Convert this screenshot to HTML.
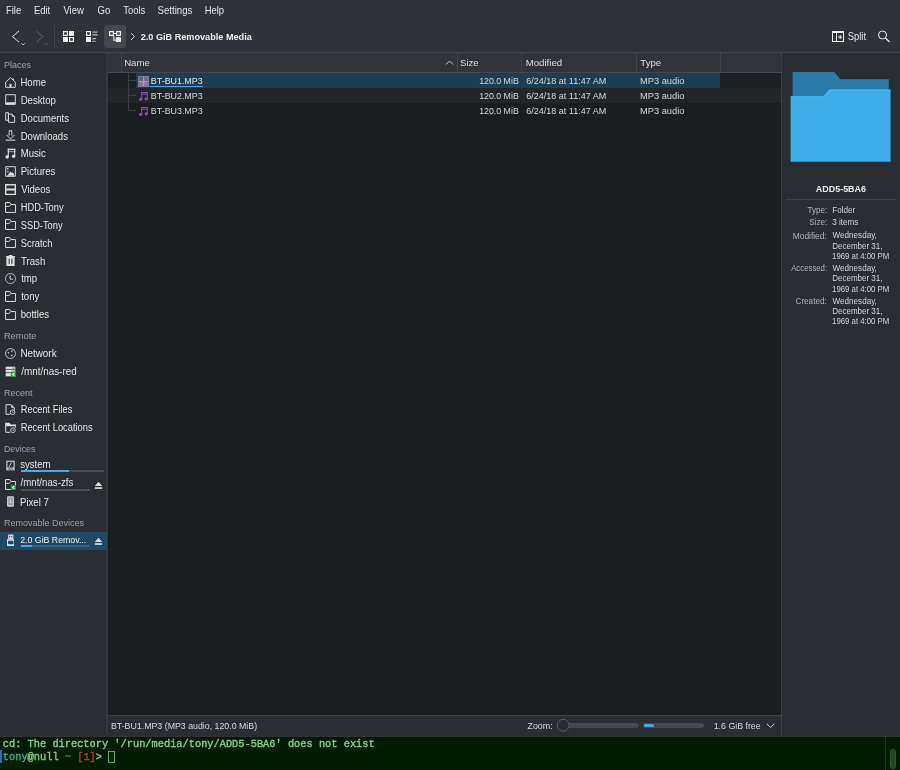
<!DOCTYPE html>
<html><head><meta charset="utf-8">
<style>
*{margin:0;padding:0;box-sizing:border-box}
html,body{width:900px;height:770px;overflow:hidden;background:#2a2e32}
.a{position:absolute;white-space:nowrap}
#root{position:absolute;left:0;top:0;width:900px;height:770px;will-change:transform;overflow:hidden}
</style></head><body><div id="root">
<div class="a" style="left:0px;top:0px;width:900px;height:52px;background:#2f3338;"></div>
<div class="a" style="left:0px;top:52px;width:900px;height:1px;background:#43474c;"></div>
<div class="a" style="left:0px;top:53px;width:106px;height:683px;background:#2a2e32;"></div>
<div class="a" style="left:106px;top:53px;width:2px;height:683px;background:#34383d;"></div>
<div class="a" style="left:108px;top:53px;width:673px;height:662px;background:#1b1e20;"></div>
<div class="a" style="left:781px;top:53px;width:1px;height:683px;background:#3a3e43;"></div>
<div class="a" style="left:782px;top:53px;width:118px;height:683px;background:#2a2e32;"></div>
<div class="a" style="left:108px;top:715px;width:673px;height:1px;background:#3f4348;"></div>
<div class="a" style="left:108px;top:716px;width:673px;height:20px;background:#2a2e32;"></div>
<div class="a" style="left:0px;top:736px;width:900px;height:1px;background:#2c3530;"></div>
<div class="a" style="left:0px;top:737px;width:900px;height:33px;background:#001c00;"></div>
<div class="a" style="left:5.98px;top:6.07px;font-size:9.45px;line-height:9.45px;color:#e2e3e4;font-weight:400;font-family:'Liberation Sans', sans-serif;transform:scaleY(1.1);transform-origin:0 8.22px;">File</div>
<div class="a" style="left:33.99px;top:6.07px;font-size:9.45px;line-height:9.45px;color:#e2e3e4;font-weight:400;font-family:'Liberation Sans', sans-serif;transform:scaleY(1.1);transform-origin:0 8.22px;">Edit</div>
<div class="a" style="left:63.47px;top:6.07px;font-size:9.45px;line-height:9.45px;color:#e2e3e4;font-weight:400;font-family:'Liberation Sans', sans-serif;transform:scaleY(1.1);transform-origin:0 8.22px;">View</div>
<div class="a" style="left:97.56px;top:6.07px;font-size:9.45px;line-height:9.45px;color:#e2e3e4;font-weight:400;font-family:'Liberation Sans', sans-serif;transform:scaleY(1.1);transform-origin:0 8.22px;">Go</div>
<div class="a" style="left:123.25px;top:6.07px;font-size:9.45px;line-height:9.45px;color:#e2e3e4;font-weight:400;font-family:'Liberation Sans', sans-serif;transform:scaleY(1.1);transform-origin:0 8.22px;">Tools</div>
<div class="a" style="left:157.59px;top:5.97px;font-size:9.65px;line-height:9.65px;color:#e2e3e4;font-weight:400;font-family:'Liberation Sans', sans-serif;transform:scaleY(1.1);transform-origin:0 8.32px;">Settings</div>
<div class="a" style="left:204.68px;top:6.07px;font-size:9.45px;line-height:9.45px;color:#e2e3e4;font-weight:400;font-family:'Liberation Sans', sans-serif;transform:scaleY(1.1);transform-origin:0 8.22px;">Help</div>
<svg class="a" style="left:8px;top:26px;" width="20" height="22" viewBox="0 0 20 22" preserveAspectRatio="none"><path d="M11 5 L4.5 10.6 L11 16.2" fill="none" stroke="#eff0f1" stroke-width="1" opacity="0.9"/><path d="M13.5 17.3 l1.6 1.6 l1.6 -1.6" fill="none" stroke="#eff0f1" stroke-width="1" opacity="0.8"/></svg>
<svg class="a" style="left:32px;top:26px;" width="20" height="22" viewBox="0 0 20 22" preserveAspectRatio="none"><path d="M4.6 5 L10.6 10.6 L4.6 16.2" fill="none" stroke="#5f6368" stroke-width="1"/><path d="M12.5 17.3 l1.6 1.6 l1.6 -1.6" fill="none" stroke="#5f6368" stroke-width="1"/></svg>
<div class="a" style="left:54px;top:25px;width:1px;height:23px;background:#3f4348;"></div>
<svg class="a" style="left:62.8px;top:31px;" width="12" height="12" viewBox="0 0 12 12" preserveAspectRatio="none"><rect x="0.6" y="0.6" width="3.8" height="3.8" fill="none" stroke="#eff0f1" stroke-width="1.2"/><rect x="6" y="0" width="5" height="5" fill="#eff0f1"/><rect x="0" y="6" width="5" height="5" fill="#eff0f1"/><rect x="6.6" y="6.6" width="3.8" height="3.8" fill="none" stroke="#eff0f1" stroke-width="1.2"/></svg>
<svg class="a" style="left:85.7px;top:31px;" width="12" height="12" viewBox="0 0 12 12" preserveAspectRatio="none"><rect x="0.6" y="0.6" width="3.8" height="3.8" fill="none" stroke="#eff0f1" stroke-width="1.2"/><rect x="0" y="6" width="5" height="5" fill="#eff0f1"/><rect x="6.3" y="0.6" width="5.3" height="1" fill="#eff0f1" opacity="0.8"/><rect x="6.3" y="3.4" width="5.3" height="1" fill="#eff0f1" opacity="0.9"/><rect x="6.3" y="7.2" width="3.5" height="1" fill="#eff0f1" opacity="0.9"/><rect x="6.3" y="9.8" width="3.5" height="1" fill="#eff0f1" opacity="0.7"/></svg>
<div class="a" style="left:103.5px;top:25px;width:22.5px;height:23px;background:#45494e;border-radius:3px"></div>
<svg class="a" style="left:109.1px;top:31px;" width="13" height="12" viewBox="0 0 13 12" preserveAspectRatio="none"><rect x="0.6" y="0.6" width="3.8" height="3.8" fill="none" stroke="#eff0f1" stroke-width="1.2"/><rect x="7.6" y="0.6" width="3.8" height="3.8" fill="none" stroke="#eff0f1" stroke-width="1.2"/><rect x="5" y="2" width="2.5" height="1" fill="#eff0f1"/><rect x="4.3" y="5" width="1" height="4.5" fill="#eff0f1"/><rect x="4.3" y="8.6" width="2.6" height="1" fill="#eff0f1"/><rect x="6.8" y="6.2" width="5.2" height="4.8" fill="#eff0f1"/></svg>
<svg class="a" style="left:129px;top:32px;" width="8" height="9" viewBox="0 0 8 9" preserveAspectRatio="none"><path d="M2 1 L5.5 4.5 L2 8" fill="none" stroke="#c4c6c8" stroke-width="1"/></svg>
<div class="a" style="left:140.73px;top:32.92px;font-size:9.15px;line-height:9.15px;color:#eeeff0;font-weight:700;font-family:'Liberation Sans', sans-serif;">2.0 GiB Removable Media</div>
<svg class="a" style="left:832px;top:31px;" width="12" height="11" viewBox="0 0 12 11" preserveAspectRatio="none"><rect x="0.5" y="0.5" width="11" height="10" fill="none" stroke="#eff0f1" stroke-width="1"/><rect x="0" y="0" width="12" height="2" fill="#eff0f1"/><rect x="4" y="2" width="1" height="9" fill="#eff0f1"/><rect x="6.2" y="5.6" width="4" height="1" fill="#eff0f1"/><rect x="7.7" y="4.1" width="1" height="4" fill="#eff0f1"/></svg>
<div class="a" style="left:847.69px;top:31.98px;font-size:9.45px;line-height:9.45px;color:#e2e3e4;font-weight:400;font-family:'Liberation Sans', sans-serif;transform:scaleY(1.1);transform-origin:0 8.22px;">Split</div>
<svg class="a" style="left:877px;top:30px;" width="14" height="13" viewBox="0 0 14 13" preserveAspectRatio="none"><circle cx="5.5" cy="5" r="4" fill="none" stroke="#eff0f1" stroke-width="1"/><path d="M8.4 8 L12.6 12" stroke="#eff0f1" stroke-width="1.1"/></svg>
<div class="a" style="left:108px;top:53px;width:673px;height:19px;background:#30343a;"></div>
<div class="a" style="left:108px;top:72px;width:673px;height:1px;background:#45494e;"></div>
<div class="a" style="left:120.5px;top:53px;width:1.5px;height:19px;background:#404449;"></div>
<div class="a" style="left:456.5px;top:53px;width:1.5px;height:19px;background:#404449;"></div>
<div class="a" style="left:520.5px;top:53px;width:1.5px;height:19px;background:#404449;"></div>
<div class="a" style="left:635.5px;top:53px;width:1.5px;height:19px;background:#404449;"></div>
<div class="a" style="left:719.5px;top:53px;width:1.5px;height:19px;background:#404449;"></div>
<div class="a" style="left:124.20px;top:58.30px;font-size:9.60px;line-height:9.60px;color:#dcdee0;font-weight:400;font-family:'Liberation Sans', sans-serif;">Name</div>
<svg class="a" style="left:445px;top:60px;" width="9" height="5" viewBox="0 0 9 5" preserveAspectRatio="none"><path d="M1 4.5 L4.5 1 L8 4.5" fill="none" stroke="#bfc2c5" stroke-width="1"/></svg>
<div class="a" style="left:460.02px;top:58.30px;font-size:9.60px;line-height:9.60px;color:#dcdee0;font-weight:400;font-family:'Liberation Sans', sans-serif;">Size</div>
<div class="a" style="left:525.76px;top:58.27px;font-size:9.65px;line-height:9.65px;color:#dcdee0;font-weight:400;font-family:'Liberation Sans', sans-serif;">Modified</div>
<div class="a" style="left:640.34px;top:58.30px;font-size:9.60px;line-height:9.60px;color:#dcdee0;font-weight:400;font-family:'Liberation Sans', sans-serif;">Type</div>
<div class="a" style="left:108px;top:73px;width:673px;height:15px;background:#1d2023;"></div>
<div class="a" style="left:108px;top:88px;width:673px;height:15px;background:#232629;"></div>
<div class="a" style="left:108px;top:103px;width:673px;height:15px;background:#1b1e20;"></div>
<div class="a" style="left:136px;top:73px;width:584px;height:15px;background:#1f3d51;"></div>
<div class="a" style="left:128px;top:73px;width:1px;height:37px;background:#3b3f44;"></div>
<div class="a" style="left:128px;top:80px;width:8px;height:1px;background:#3b3f44;"></div>
<div class="a" style="left:128px;top:95px;width:8px;height:1px;background:#3b3f44;"></div>
<div class="a" style="left:128px;top:110px;width:8px;height:1px;background:#3b3f44;"></div>
<svg class="a" style="left:137.6px;top:75.9px;" width="11" height="11" viewBox="0 0 11 11" preserveAspectRatio="none"><rect x="0" y="0" width="11" height="11" fill="#7a7e85"/><rect x="1" y="1" width="9" height="9" fill="#6a6e76"/><rect x="1.3" y="1.3" width="3.7" height="3.7" fill="#66606f"/><rect x="6" y="1.3" width="3.7" height="3.7" fill="#7a6890"/><rect x="1.3" y="6" width="3.7" height="3.7" fill="#9470b4"/><rect x="6" y="6" width="3.7" height="3.7" fill="#9470b4"/><path d="M1 5.5 H10 M5.5 1 V10" stroke="#9ea2a8" stroke-width="1"/></svg>
<svg class="a" style="left:138.8px;top:92px;" width="9" height="9" viewBox="0 0 9 9" preserveAspectRatio="none"><rect x="2.2" y="0" width="6.5" height="1.3" fill="#9349bd"/><rect x="2.2" y="2" width="6.5" height="0.7" fill="#9349bd"/><rect x="2.2" y="0" width="1" height="7.3" fill="#9349bd"/><rect x="7.7" y="0" width="1" height="6.8" fill="#9349bd"/><circle cx="1.7" cy="7.3" r="1.6" fill="#9349bd"/><circle cx="7.2" cy="6.8" r="1.6" fill="#9349bd"/></svg>
<svg class="a" style="left:138.8px;top:107px;" width="9" height="9" viewBox="0 0 9 9" preserveAspectRatio="none"><rect x="2.2" y="0" width="6.5" height="1.3" fill="#9349bd"/><rect x="2.2" y="2" width="6.5" height="0.7" fill="#9349bd"/><rect x="2.2" y="0" width="1" height="7.3" fill="#9349bd"/><rect x="7.7" y="0" width="1" height="6.8" fill="#9349bd"/><circle cx="1.7" cy="7.3" r="1.6" fill="#9349bd"/><circle cx="7.2" cy="6.8" r="1.6" fill="#9349bd"/></svg>
<div class="a" style="left:150.83px;top:76.85px;font-size:8.90px;line-height:8.90px;color:#e4e6e8;font-weight:400;font-family:'Liberation Sans', sans-serif;">BT-BU1.MP3</div>
<div class="a" style="left:479.15px;top:76.90px;font-size:8.80px;line-height:8.80px;color:#d4d6d8;font-weight:400;font-family:'Liberation Sans', sans-serif;">120.0 MiB</div>
<div class="a" style="left:526.27px;top:76.80px;font-size:9.00px;line-height:9.00px;color:#d4d6d8;font-weight:400;font-family:'Liberation Sans', sans-serif;">6/24/18 at 11:47 AM</div>
<div class="a" style="left:639.99px;top:76.65px;font-size:9.30px;line-height:9.30px;color:#d4d6d8;font-weight:400;font-family:'Liberation Sans', sans-serif;">MP3 audio</div>
<div class="a" style="left:150.83px;top:91.85px;font-size:8.90px;line-height:8.90px;color:#d4d6d8;font-weight:400;font-family:'Liberation Sans', sans-serif;">BT-BU2.MP3</div>
<div class="a" style="left:479.15px;top:91.90px;font-size:8.80px;line-height:8.80px;color:#d4d6d8;font-weight:400;font-family:'Liberation Sans', sans-serif;">120.0 MiB</div>
<div class="a" style="left:526.27px;top:91.80px;font-size:9.00px;line-height:9.00px;color:#d4d6d8;font-weight:400;font-family:'Liberation Sans', sans-serif;">6/24/18 at 11:47 AM</div>
<div class="a" style="left:639.99px;top:91.65px;font-size:9.30px;line-height:9.30px;color:#d4d6d8;font-weight:400;font-family:'Liberation Sans', sans-serif;">MP3 audio</div>
<div class="a" style="left:150.83px;top:106.85px;font-size:8.90px;line-height:8.90px;color:#d4d6d8;font-weight:400;font-family:'Liberation Sans', sans-serif;">BT-BU3.MP3</div>
<div class="a" style="left:479.15px;top:106.90px;font-size:8.80px;line-height:8.80px;color:#d4d6d8;font-weight:400;font-family:'Liberation Sans', sans-serif;">120.0 MiB</div>
<div class="a" style="left:526.27px;top:106.80px;font-size:9.00px;line-height:9.00px;color:#d4d6d8;font-weight:400;font-family:'Liberation Sans', sans-serif;">6/24/18 at 11:47 AM</div>
<div class="a" style="left:639.99px;top:106.65px;font-size:9.30px;line-height:9.30px;color:#d4d6d8;font-weight:400;font-family:'Liberation Sans', sans-serif;">MP3 audio</div>
<div class="a" style="left:150px;top:86px;width:53px;height:1px;background:#3daee9;"></div>
<div class="a" style="left:3.95px;top:60.70px;font-size:9.00px;line-height:9.00px;color:#9fa3a7;font-weight:400;font-family:'Liberation Sans', sans-serif;transform:scaleY(1.06);transform-origin:0 7.50px;">Places</div>
<div class="a" style="left:20.40px;top:77.90px;font-size:9.60px;line-height:9.60px;color:#e2e3e4;font-weight:400;font-family:'Liberation Sans', sans-serif;transform:scaleY(1.12);transform-origin:0 8.30px;">Home</div>
<svg class="a" style="left:5px;top:76.5px;" width="11" height="11" viewBox="0 0 16 16" preserveAspectRatio="none"><path d="M1 7.5 L8 1 L15 7.5 V15 H1 Z" fill="none" stroke="#dcdddf" stroke-width="1.4" stroke-linejoin="miter"/><path d="M6.5 10 H9.5 V15 H6.5 Z" fill="#dcdddf"/><path d="M11 2 H13 V5 L11 3.2 Z" fill="#dcdddf"/></svg>
<div class="a" style="left:20.66px;top:95.74px;font-size:9.65px;line-height:9.65px;color:#e2e3e4;font-weight:400;font-family:'Liberation Sans', sans-serif;transform:scaleY(1.12);transform-origin:0 8.32px;">Desktop</div>
<svg class="a" style="left:5px;top:94.37px;" width="11" height="11" viewBox="0 0 16 16" preserveAspectRatio="none"><path d="M1 1 H15 V15 H1 Z" fill="none" stroke="#dcdddf" stroke-width="1.4" stroke-linejoin="miter"/><path d="M1 12 H15 V15 H1 Z" fill="#dcdddf"/></svg>
<div class="a" style="left:20.68px;top:113.66px;font-size:9.55px;line-height:9.55px;color:#e2e3e4;font-weight:400;font-family:'Liberation Sans', sans-serif;transform:scaleY(1.12);transform-origin:0 8.28px;">Documents</div>
<svg class="a" style="left:5px;top:112.24000000000001px;" width="11" height="11" viewBox="0 0 16 16" preserveAspectRatio="none"><path d="M1 1 H5 V12 H1 Z" fill="none" stroke="#dcdddf" stroke-width="1.4" stroke-linejoin="miter"/><path d="M5 3 H10 L14 7 V15 H5 Z" fill="none" stroke="#dcdddf" stroke-width="1.4" stroke-linejoin="miter"/><path d="M10 3 L14 7 H10 Z" fill="#dcdddf"/></svg>
<div class="a" style="left:20.68px;top:131.53px;font-size:9.55px;line-height:9.55px;color:#e2e3e4;font-weight:400;font-family:'Liberation Sans', sans-serif;transform:scaleY(1.12);transform-origin:0 8.28px;">Downloads</div>
<svg class="a" style="left:5px;top:130.10999999999999px;" width="11" height="11" viewBox="0 0 16 16" preserveAspectRatio="none"><path d="M6 1 H10 V8" fill="none" stroke="#dcdddf" stroke-width="1.4" stroke-linejoin="miter"/><path d="M6 1 V8" fill="none" stroke="#dcdddf" stroke-width="1.4" stroke-linejoin="miter"/><path d="M2 7 L8 13 L14 7" fill="none" stroke="#dcdddf" stroke-width="1.4" stroke-linejoin="miter"/><path d="M1 14 H15 V15.5 H1 Z" fill="#dcdddf"/></svg>
<div class="a" style="left:20.66px;top:149.38px;font-size:9.60px;line-height:9.60px;color:#e2e3e4;font-weight:400;font-family:'Liberation Sans', sans-serif;transform:scaleY(1.12);transform-origin:0 8.30px;">Music</div>
<svg class="a" style="left:5px;top:147.98px;" width="11" height="11" viewBox="0 0 16 16" preserveAspectRatio="none"><path d="M4 1 H15 V3 H4 Z" fill="#dcdddf"/><path d="M4 1 H5.6 V13 H4 Z" fill="#dcdddf"/><path d="M13.4 1 H15 V12 H13.4 Z" fill="#dcdddf"/><path d="M4 5 H15 V6 H4 Z" fill="#dcdddf"/><circle cx="3" cy="13" r="2.5" fill="#dcdddf"/><circle cx="12.5" cy="12" r="2.5" fill="#dcdddf"/></svg>
<div class="a" style="left:20.68px;top:167.25px;font-size:9.60px;line-height:9.60px;color:#e2e3e4;font-weight:400;font-family:'Liberation Sans', sans-serif;transform:scaleY(1.12);transform-origin:0 8.30px;">Pictures</div>
<svg class="a" style="left:5px;top:165.85px;" width="11" height="11" viewBox="0 0 16 16" preserveAspectRatio="none"><path d="M1 1 H15 V15 H1 Z" fill="none" stroke="#dcdddf" stroke-width="1.4" stroke-linejoin="miter"/><path d="M3 14 L8 8 L10 10 L11.5 9 L14 14 Z" fill="#dcdddf"/><path d="M3 3 H5 V5 H3 Z" fill="#dcdddf"/><path d="M3 7 L4 9 L6 8" fill="none" stroke="#dcdddf" stroke-width="1" stroke-linejoin="miter"/></svg>
<div class="a" style="left:21.18px;top:185.12px;font-size:9.60px;line-height:9.60px;color:#e2e3e4;font-weight:400;font-family:'Liberation Sans', sans-serif;transform:scaleY(1.12);transform-origin:0 8.30px;">Videos</div>
<svg class="a" style="left:5px;top:183.72px;" width="11" height="11" viewBox="0 0 16 16" preserveAspectRatio="none"><path d="M1 1 H15 V15 H1 Z" fill="none" stroke="#dcdddf" stroke-width="2" stroke-linejoin="miter"/><path d="M1 6.5 H15 V9.5 H1 Z" fill="#dcdddf"/></svg>
<div class="a" style="left:20.71px;top:203.64px;font-size:9.30px;line-height:9.30px;color:#e2e3e4;font-weight:400;font-family:'Liberation Sans', sans-serif;transform:scaleY(1.12);transform-origin:0 7.65px;">HDD-Tony</div>
<svg class="a" style="left:5px;top:201.59px;" width="11" height="11" viewBox="0 0 16 16" preserveAspectRatio="none"><path d="M0.8 0.8 H7.1 L8.6 3.6 H15.2 V15.2 H0.8 Z" fill="none" stroke="#dcdddf" stroke-width="1.45" stroke-linejoin="miter"/><path d="M0.8 6.4 H6.2 L7.8 4.2" fill="none" stroke="#dcdddf" stroke-width="1.3" stroke-linejoin="miter"/></svg>
<div class="a" style="left:20.75px;top:221.51px;font-size:9.30px;line-height:9.30px;color:#e2e3e4;font-weight:400;font-family:'Liberation Sans', sans-serif;transform:scaleY(1.12);transform-origin:0 7.65px;">SSD-Tony</div>
<svg class="a" style="left:5px;top:219.46px;" width="11" height="11" viewBox="0 0 16 16" preserveAspectRatio="none"><path d="M0.8 0.8 H7.1 L8.6 3.6 H15.2 V15.2 H0.8 Z" fill="none" stroke="#dcdddf" stroke-width="1.45" stroke-linejoin="miter"/><path d="M0.8 6.4 H6.2 L7.8 4.2" fill="none" stroke="#dcdddf" stroke-width="1.3" stroke-linejoin="miter"/></svg>
<div class="a" style="left:20.71px;top:238.83px;font-size:9.40px;line-height:9.40px;color:#e2e3e4;font-weight:400;font-family:'Liberation Sans', sans-serif;transform:scaleY(1.12);transform-origin:0 8.20px;">Scratch</div>
<svg class="a" style="left:5px;top:237.33px;" width="11" height="11" viewBox="0 0 16 16" preserveAspectRatio="none"><path d="M0.8 0.8 H7.1 L8.6 3.6 H15.2 V15.2 H0.8 Z" fill="none" stroke="#dcdddf" stroke-width="1.45" stroke-linejoin="miter"/><path d="M0.8 6.4 H6.2 L7.8 4.2" fill="none" stroke="#dcdddf" stroke-width="1.3" stroke-linejoin="miter"/></svg>
<div class="a" style="left:21.05px;top:256.60px;font-size:9.60px;line-height:9.60px;color:#e2e3e4;font-weight:400;font-family:'Liberation Sans', sans-serif;transform:scaleY(1.12);transform-origin:0 8.30px;">Trash</div>
<svg class="a" style="left:5px;top:255.2px;" width="11" height="11" viewBox="0 0 16 16" preserveAspectRatio="none"><path d="M1 1.5 H15 L14 3 V16 H2 V3 Z" fill="#dcdddf"/><path d="M5.5 0 H10.5 V1.5 H5.5 Z" fill="#dcdddf"/><path d="M6 5.5 V13 M10 5.5 V13" stroke="#2a2e32" stroke-width="1.4"/></svg>
<div class="a" style="left:21.13px;top:274.47px;font-size:9.60px;line-height:9.60px;color:#e2e3e4;font-weight:400;font-family:'Liberation Sans', sans-serif;transform:scaleY(1.12);transform-origin:0 8.30px;">tmp</div>
<svg class="a" style="left:5px;top:273.07px;" width="11" height="11" viewBox="0 0 16 16" preserveAspectRatio="none"><circle cx="8" cy="8" r="7.3" fill="none" stroke="#dcdddf" stroke-width="1.1"/><path d="M7.5 3.5 V9 H11.5" fill="none" stroke="#dcdddf" stroke-width="1.4" stroke-linejoin="miter"/></svg>
<div class="a" style="left:21.13px;top:292.34px;font-size:9.60px;line-height:9.60px;color:#e2e3e4;font-weight:400;font-family:'Liberation Sans', sans-serif;transform:scaleY(1.12);transform-origin:0 8.30px;">tony</div>
<svg class="a" style="left:5px;top:290.93999999999994px;" width="11" height="11" viewBox="0 0 16 16" preserveAspectRatio="none"><path d="M0.8 0.8 H7.1 L8.6 3.6 H15.2 V15.2 H0.8 Z" fill="none" stroke="#dcdddf" stroke-width="1.45" stroke-linejoin="miter"/><path d="M0.8 6.4 H6.2 L7.8 4.2" fill="none" stroke="#dcdddf" stroke-width="1.3" stroke-linejoin="miter"/></svg>
<div class="a" style="left:20.78px;top:310.21px;font-size:9.60px;line-height:9.60px;color:#e2e3e4;font-weight:400;font-family:'Liberation Sans', sans-serif;transform:scaleY(1.12);transform-origin:0 8.30px;">bottles</div>
<svg class="a" style="left:5px;top:308.80999999999995px;" width="11" height="11" viewBox="0 0 16 16" preserveAspectRatio="none"><path d="M0.8 0.8 H7.1 L8.6 3.6 H15.2 V15.2 H0.8 Z" fill="none" stroke="#dcdddf" stroke-width="1.45" stroke-linejoin="miter"/><path d="M0.8 6.4 H6.2 L7.8 4.2" fill="none" stroke="#dcdddf" stroke-width="1.3" stroke-linejoin="miter"/></svg>
<div class="a" style="left:3.88px;top:331.75px;font-size:9.30px;line-height:9.30px;color:#9fa3a7;font-weight:400;font-family:'Liberation Sans', sans-serif;transform:scaleY(1.06);transform-origin:0 7.65px;">Remote</div>
<div class="a" style="left:20.39px;top:348.95px;font-size:9.90px;line-height:9.90px;color:#e2e3e4;font-weight:400;font-family:'Liberation Sans', sans-serif;transform:scaleY(1.12);transform-origin:0 8.45px;">Network</div>
<svg class="a" style="left:5px;top:347.7px;" width="11" height="11" viewBox="0 0 16 16" preserveAspectRatio="none"><circle cx="8" cy="8" r="7.2" fill="none" stroke="#dcdddf" stroke-width="1.2"/><circle cx="5" cy="7" r="1.2" fill="#dcdddf"/><circle cx="10" cy="4.5" r="1.2" fill="#dcdddf"/><circle cx="10" cy="11" r="1.2" fill="#dcdddf"/></svg>
<div class="a" style="left:21.22px;top:366.75px;font-size:9.90px;line-height:9.90px;color:#e2e3e4;font-weight:400;font-family:'Liberation Sans', sans-serif;transform:scaleY(1.12);transform-origin:0 8.45px;">/mnt/nas-red</div>
<svg class="a" style="left:5px;top:365.5px;" width="11" height="11" viewBox="0 0 16 16" preserveAspectRatio="none"><path d="M1 1 H15 V15 H1 Z" fill="#dcdddf"/><path d="M1 5 H15 M1 9.5 H15" stroke="#2a2e32" stroke-width="1"/><path d="M11 3 H13.5 M11 7.3 H13.5" stroke="#2a2e32" stroke-width="1"/><rect x="8.5" y="8.5" width="7.5" height="7.5" fill="#1e9e4a"/><path d="M13.6 10.3 L10.8 12.2 L13.6 14.1" fill="none" stroke="#fff" stroke-width="1.5"/></svg>
<div class="a" style="left:3.93px;top:388.50px;font-size:9.00px;line-height:9.00px;color:#9fa3a7;font-weight:400;font-family:'Liberation Sans', sans-serif;transform:scaleY(1.06);transform-origin:0 7.50px;">Recent</div>
<div class="a" style="left:20.75px;top:406.15px;font-size:9.30px;line-height:9.30px;color:#e2e3e4;font-weight:400;font-family:'Liberation Sans', sans-serif;transform:scaleY(1.12);transform-origin:0 7.65px;">Recent Files</div>
<svg class="a" style="left:5px;top:404.09999999999997px;" width="11" height="11" viewBox="0 0 16 16" preserveAspectRatio="none"><path d="M1.5 1 H9 L13.5 5.5 V9 M7 15 H1.5 V1" fill="none" stroke="#dcdddf" stroke-width="1.4" stroke-linejoin="miter"/><path d="M9 1 L13.5 5.5 H9 Z" fill="#dcdddf"/><circle cx="11" cy="12" r="3.4" fill="none" stroke="#dcdddf" stroke-width="1.3"/><path d="M11 10.5 V12.2 H12.3" fill="none" stroke="#dcdddf" stroke-width="1" stroke-linejoin="miter"/></svg>
<div class="a" style="left:20.69px;top:423.95px;font-size:9.30px;line-height:9.30px;color:#e2e3e4;font-weight:400;font-family:'Liberation Sans', sans-serif;transform:scaleY(1.12);transform-origin:0 7.65px;">Recent Locations</div>
<svg class="a" style="left:5px;top:421.9px;" width="11" height="11" viewBox="0 0 16 16" preserveAspectRatio="none"><path d="M1 1 H6.5 L8.5 3.5 H15 V6 H1 Z" fill="#dcdddf"/><path d="M1 1 V15 H7.5 M15 3.5 V8.5" fill="none" stroke="#dcdddf" stroke-width="1.4" stroke-linejoin="miter"/><circle cx="11.5" cy="12" r="3.4" fill="none" stroke="#dcdddf" stroke-width="1.3"/><path d="M11.5 10.5 V12.2 H12.8" fill="none" stroke="#dcdddf" stroke-width="1" stroke-linejoin="miter"/></svg>
<div class="a" style="left:3.93px;top:444.95px;font-size:8.90px;line-height:8.90px;color:#9fa3a7;font-weight:400;font-family:'Liberation Sans', sans-serif;transform:scaleY(1.06);transform-origin:0 7.45px;">Devices</div>
<div class="a" style="left:20.23px;top:460.20px;font-size:9.60px;line-height:9.60px;color:#e2e3e4;font-weight:400;font-family:'Liberation Sans', sans-serif;transform:scaleY(1.12);transform-origin:0 8.30px;">system</div>
<svg class="a" style="left:5px;top:460.3px;" width="11" height="11" viewBox="0 0 16 16" preserveAspectRatio="none"><path d="M2 1 H14 V15 H2 Z" fill="#dcdddf"/><path d="M3.5 2.5 H12.5 V11 H3.5 Z" fill="#2a2e32"/><path d="M9.5 3.5 L6 10" stroke="#dcdddf" stroke-width="1.3"/><rect x="4" y="12.5" width="8" height="1.3" fill="#2a2e32"/></svg>
<div class="a" style="left:20.7px;top:470.2px;width:83px;height:2px;background:#4a4e53;"></div>
<div class="a" style="left:20.7px;top:470.2px;width:48.5px;height:2px;background:#3daee9;"></div>
<div class="a" style="left:20.50px;top:478.45px;font-size:9.70px;line-height:9.70px;color:#e2e3e4;font-weight:400;font-family:'Liberation Sans', sans-serif;transform:scaleY(1.12);transform-origin:0 8.35px;">/mnt/nas-zfs</div>
<svg class="a" style="left:5px;top:478.5px;" width="11" height="11" viewBox="0 0 16 16" preserveAspectRatio="none"><path d="M0.8 0.8 H7.1 L8.6 3.6 H15.2 V15.2 H0.8 Z" fill="none" stroke="#dcdddf" stroke-width="1.45" stroke-linejoin="miter"/><path d="M0.8 6.4 H6.2 L7.8 4.2" fill="none" stroke="#dcdddf" stroke-width="1.3" stroke-linejoin="miter"/><rect x="8.5" y="8.5" width="7.5" height="7.5" fill="#1e9e4a"/><path d="M13.6 10.3 L10.8 12.2 L13.6 14.1" fill="none" stroke="#fff" stroke-width="1.5"/></svg>
<div class="a" style="left:20.7px;top:488.6px;width:69.5px;height:2px;background:#4a4e53;"></div>
<svg class="a" style="left:93.5px;top:480.5px;" width="9" height="9" viewBox="0 0 16 16" preserveAspectRatio="none"><path d="M8 1.5 L14.5 9 H1.5 Z" fill="#dcdddf"/><path d="M1.5 11 H14.5 V14 H1.5 Z" fill="#dcdddf"/></svg>
<div class="a" style="left:20.01px;top:497.70px;font-size:9.60px;line-height:9.60px;color:#e2e3e4;font-weight:400;font-family:'Liberation Sans', sans-serif;transform:scaleY(1.12);transform-origin:0 8.30px;">Pixel 7</div>
<svg class="a" style="left:5px;top:495.7px;" width="11" height="11" viewBox="0 0 16 16" preserveAspectRatio="none"><rect x="3" y="0.5" width="10" height="15" rx="1.2" fill="#cfd1d3"/><rect x="4.3" y="2" width="7.4" height="11.5" fill="#9da1a5"/><path d="M8 5 V10 M6.5 8.5 L8 10 L9.5 8.5" stroke="#e8e8e8" stroke-width="0.8" fill="none"/></svg>
<div class="a" style="left:3.93px;top:519.10px;font-size:9.00px;line-height:9.00px;color:#9fa3a7;font-weight:400;font-family:'Liberation Sans', sans-serif;transform:scaleY(1.06);transform-origin:0 7.50px;">Removable Devices</div>
<div class="a" style="left:0px;top:531.5px;width:107px;height:18px;background:#1f4a63;"></div>
<div class="a" style="left:20.26px;top:535.83px;font-size:8.75px;line-height:8.75px;color:#eeeff0;font-weight:400;font-family:'Liberation Sans', sans-serif;">2.0 GiB Remov...</div>
<svg class="a" style="left:6.8px;top:534px;" width="7.5" height="12.3" viewBox="0 0 10 13" preserveAspectRatio="none"><rect x="1.5" y="0.5" width="7" height="5" fill="#dcdddf"/><rect x="2.8" y="2" width="1.5" height="1.5" fill="#2a5770"/><rect x="5.7" y="2" width="1.5" height="1.5" fill="#2a5770"/><rect x="0" y="5.5" width="10" height="7.3" fill="#dcdddf"/><rect x="1.4" y="7.2" width="7.2" height="3.6" fill="#224b63"/></svg>
<div class="a" style="left:20.7px;top:545.1px;width:69.5px;height:2px;background:#3c5f74;"></div>
<div class="a" style="left:20.7px;top:545.1px;width:11.5px;height:2px;background:#3daee9;"></div>
<svg class="a" style="left:93.5px;top:536.8px;" width="9" height="9" viewBox="0 0 16 16" preserveAspectRatio="none"><path d="M8 1.5 L14.5 9 H1.5 Z" fill="#dcdddf"/><path d="M1.5 11 H14.5 V14 H1.5 Z" fill="#dcdddf"/></svg>
<svg class="a" style="left:790px;top:72px;" width="101" height="90" viewBox="0 0 101 90" preserveAspectRatio="none"><path d="M2.5 0 H44.2 L50.5 7.2 H98.8 V30 H2.5 Z" fill="#2a7aa8"/><path d="M0.6 24.3 H33.6 L39.5 17.6 H100.6 V89.8 H0.6 Z" fill="#3daee9"/><path d="M0.6 24.3 H33.6 L39.5 17.6 H100.6 V18.6 H39.9 L34 25.3 H0.6 Z" fill="#5cc0ef" opacity="0.6"/><rect x="0.6" y="89" width="100" height="0.8" fill="#2f8fc4"/></svg>
<div class="a" style="left:815.84px;top:184.53px;font-size:8.95px;line-height:8.95px;color:#eaebec;font-weight:700;font-family:'Liberation Sans', sans-serif;">ADD5-5BA6</div>
<div class="a" style="left:786px;top:198.5px;width:110px;height:1px;background:#3c4045;"></div>
<div class="a" style="left:807.41px;top:207.35px;font-size:8.10px;line-height:8.10px;color:#b0b3b6;font-weight:400;font-family:'Liberation Sans', sans-serif;transform:scaleY(1.12);transform-origin:0 6.55px;">Type:</div>
<div class="a" style="left:832.19px;top:207.35px;font-size:8.10px;line-height:8.10px;color:#d2d4d6;font-weight:400;font-family:'Liberation Sans', sans-serif;transform:scaleY(1.12);transform-origin:0 6.55px;">Folder</div>
<div class="a" style="left:809.27px;top:219.35px;font-size:8.10px;line-height:8.10px;color:#b0b3b6;font-weight:400;font-family:'Liberation Sans', sans-serif;transform:scaleY(1.12);transform-origin:0 6.55px;">Size:</div>
<div class="a" style="left:832.31px;top:219.35px;font-size:8.10px;line-height:8.10px;color:#d2d4d6;font-weight:400;font-family:'Liberation Sans', sans-serif;transform:scaleY(1.12);transform-origin:0 6.55px;">3 items</div>
<div class="a" style="left:792.78px;top:231.60px;font-size:8.40px;line-height:8.40px;color:#b0b3b6;font-weight:400;font-family:'Liberation Sans', sans-serif;transform:scaleY(1.12);transform-origin:0 7.20px;">Modified:</div>
<div class="a" style="left:832.60px;top:232.25px;font-size:8.10px;line-height:8.10px;color:#d2d4d6;font-weight:400;font-family:'Liberation Sans', sans-serif;transform:scaleY(1.12);transform-origin:0 6.55px;">Wednesday,</div>
<div class="a" style="left:832.21px;top:242.50px;font-size:8.00px;line-height:8.00px;color:#d2d4d6;font-weight:400;font-family:'Liberation Sans', sans-serif;transform:scaleY(1.12);transform-origin:0 6.50px;">December 31,</div>
<div class="a" style="left:832.07px;top:252.80px;font-size:7.80px;line-height:7.80px;color:#d2d4d6;font-weight:400;font-family:'Liberation Sans', sans-serif;transform:scaleY(1.12);transform-origin:0 6.40px;">1969 at 4:00 PM</div>
<div class="a" style="left:791.17px;top:265.10px;font-size:7.80px;line-height:7.80px;color:#b0b3b6;font-weight:400;font-family:'Liberation Sans', sans-serif;transform:scaleY(1.12);transform-origin:0 6.40px;">Accessed:</div>
<div class="a" style="left:832.60px;top:264.95px;font-size:8.10px;line-height:8.10px;color:#d2d4d6;font-weight:400;font-family:'Liberation Sans', sans-serif;transform:scaleY(1.12);transform-origin:0 6.55px;">Wednesday,</div>
<div class="a" style="left:832.21px;top:275.20px;font-size:8.00px;line-height:8.00px;color:#d2d4d6;font-weight:400;font-family:'Liberation Sans', sans-serif;transform:scaleY(1.12);transform-origin:0 6.50px;">December 31,</div>
<div class="a" style="left:832.07px;top:285.50px;font-size:7.80px;line-height:7.80px;color:#d2d4d6;font-weight:400;font-family:'Liberation Sans', sans-serif;transform:scaleY(1.12);transform-origin:0 6.40px;">1969 at 4:00 PM</div>
<div class="a" style="left:795.53px;top:297.73px;font-size:8.15px;line-height:8.15px;color:#b0b3b6;font-weight:400;font-family:'Liberation Sans', sans-serif;transform:scaleY(1.12);transform-origin:0 6.58px;">Created:</div>
<div class="a" style="left:832.60px;top:297.75px;font-size:8.10px;line-height:8.10px;color:#d2d4d6;font-weight:400;font-family:'Liberation Sans', sans-serif;transform:scaleY(1.12);transform-origin:0 6.55px;">Wednesday,</div>
<div class="a" style="left:832.21px;top:308.00px;font-size:8.00px;line-height:8.00px;color:#d2d4d6;font-weight:400;font-family:'Liberation Sans', sans-serif;transform:scaleY(1.12);transform-origin:0 6.50px;">December 31,</div>
<div class="a" style="left:832.07px;top:318.30px;font-size:7.80px;line-height:7.80px;color:#d2d4d6;font-weight:400;font-family:'Liberation Sans', sans-serif;transform:scaleY(1.12);transform-origin:0 6.40px;">1969 at 4:00 PM</div>
<div class="a" style="left:110.95px;top:722.10px;font-size:8.80px;line-height:8.80px;color:#d6d8da;font-weight:400;font-family:'Liberation Sans', sans-serif;transform:scaleY(1.08);transform-origin:0 7.40px;">BT-BU1.MP3 (MP3 audio, 120.0 MiB)</div>
<div class="a" style="left:527.52px;top:722.05px;font-size:8.90px;line-height:8.90px;color:#d6d8da;font-weight:400;font-family:'Liberation Sans', sans-serif;transform:scaleY(1.08);transform-origin:0 7.45px;">Zoom:</div>
<div class="a" style="left:566px;top:723px;width:73px;height:4.6px;background:#45494e;border-radius:2.3px"></div>
<svg class="a" style="left:556px;top:718px;" width="15" height="15" viewBox="0 0 15 15" preserveAspectRatio="none"><circle cx="7.2" cy="7.2" r="5.9" fill="#2a2e32" stroke="#5a5e63" stroke-width="1"/></svg>
<div class="a" style="left:643.3px;top:723px;width:60.3px;height:4.6px;background:#45494e;border-radius:2.3px"></div>
<div class="a" style="left:643.8px;top:723.5px;width:10px;height:3.6px;background:#3daee9;border-radius:1.8px"></div>
<div class="a" style="left:713.71px;top:722.10px;font-size:8.80px;line-height:8.80px;color:#d6d8da;font-weight:400;font-family:'Liberation Sans', sans-serif;transform:scaleY(1.08);transform-origin:0 7.40px;">1.6 GiB free</div>
<svg class="a" style="left:766px;top:723px;" width="9" height="6" viewBox="0 0 9 6" preserveAspectRatio="none"><path d="M0.8 0.8 L4.5 4.6 L8.2 0.8" fill="none" stroke="#c8cacc" stroke-width="1"/></svg>
<div class="a" style="left:2.80px;top:738.74px;font-size:10.33px;line-height:10.33px;color:#e8e8e8;font-weight:400;font-family:'Liberation Mono', monospace;-webkit-text-stroke:0.35px currentColor"><span style="color:#86cf86">cd: The directory '/run/media/tony/ADD5-5BA6' does not exist</span></div>
<div class="a" style="left:0px;top:750px;width:2px;height:12.7px;background:#2272ad;"></div>
<div class="a" style="left:2.80px;top:751.54px;font-size:10.33px;line-height:10.33px;color:#e8e8e8;font-weight:400;font-family:'Liberation Mono', monospace;-webkit-text-stroke:0.35px currentColor"><span style="color:#2fb48c">tony</span><span style="color:#86cf86">@null</span> <span style="color:#2e9e4f">~</span> <span style="color:#c9372c">[1]</span><span style="color:#86cf86">&gt;</span> </div>
<div class="a" style="left:107.7px;top:751.3px;width:7px;height:11.4px;background:transparent;border:1px solid #5fa85f"></div>
<div class="a" style="left:885px;top:737px;width:1px;height:33px;background:#173517;"></div>
<div class="a" style="left:889.8px;top:748.8px;width:6px;height:20px;background:#1f461f;border-radius:3px;border:1px solid #2b5a2b"></div>
</div></body></html>
